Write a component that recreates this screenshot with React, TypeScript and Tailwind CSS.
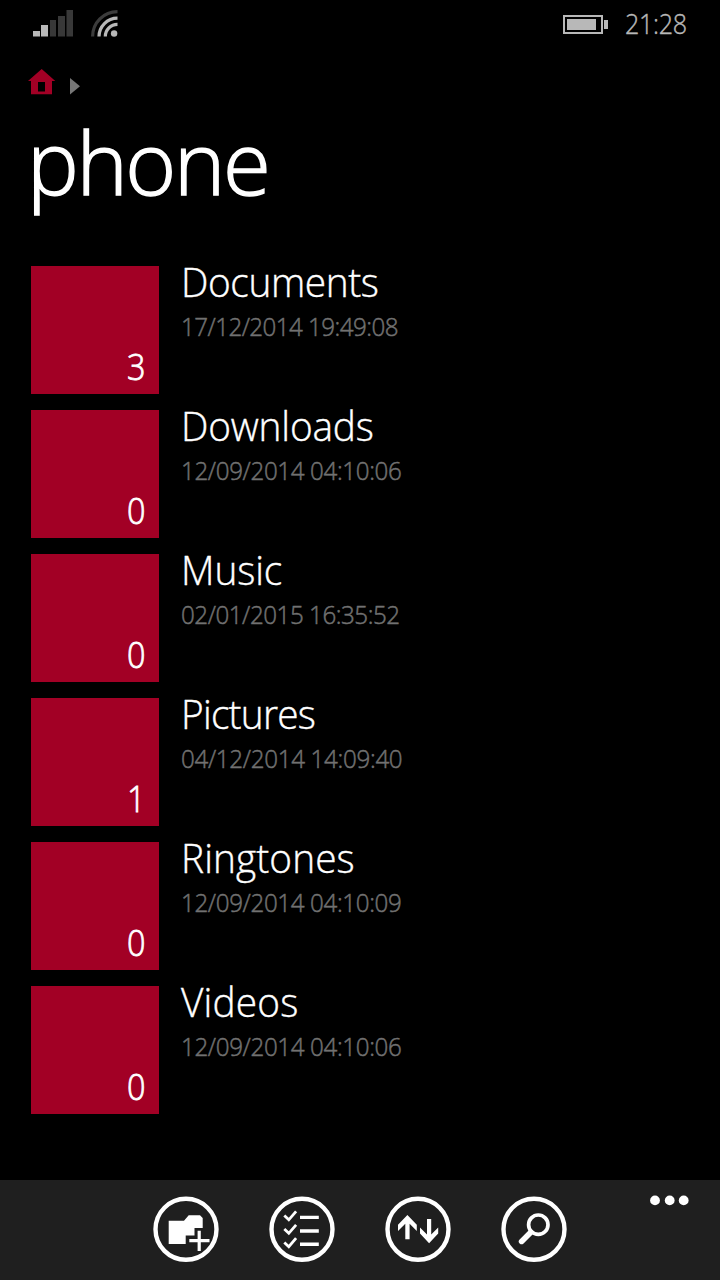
import type { ReactNode } from "react";

interface Folder {
  name: string;
  date: string;
  count: number;
  nameSpacing: string;
  dateSpacing: string;
}

const folders: Folder[] = [
  { name: "Documents", date: "17/12/2014 19:49:08", count: 3, nameSpacing: "tracking-[-0.4px]", dateSpacing: "tracking-[-0.6px]" },
  { name: "Downloads", date: "12/09/2014 04:10:06", count: 0, nameSpacing: "tracking-[-0.2px]", dateSpacing: "tracking-[-0.4px]" },
  { name: "Music", date: "02/01/2015 16:35:52", count: 0, nameSpacing: "tracking-[-0.1px]", dateSpacing: "tracking-[-0.5px]" },
  { name: "Pictures", date: "04/12/2014 14:09:40", count: 1, nameSpacing: "tracking-[-0.8px]", dateSpacing: "tracking-[-0.35px]" },
  { name: "Ringtones", date: "12/09/2014 04:10:09", count: 0, nameSpacing: "tracking-[0.1px]", dateSpacing: "tracking-[-0.4px]" },
  { name: "Videos", date: "12/09/2014 04:10:06", count: 0, nameSpacing: "tracking-[0.2px]", dateSpacing: "tracking-[-0.4px]" },
];

const StatusBar = () => (
  <header className="flex h-12 items-start px-[33px]">
    <svg width="41" height="28" viewBox="0 0 41 28" className="mt-[9px]">
      <path d="M0 22h7v5.600H0zM8 16h7v11.600H8z" fill="#b8b8b8" />
      <path d="M17 11h6v16.600h-6zM25 7h7v20.600h-7zM33.500 1H40v26.600h-6.500z" fill="#383838" />
    </svg>
    <svg width="27" height="28" viewBox="0 0 27 28" className="ml-[17px] mt-[9px]" fill="none" strokeWidth="3.2">
      <path d="M1.600 27.600A24.900 24.900 0 0 1 26.500 2.700" stroke="#3c3c3c" />
      <path d="M8 27.600A18.500 18.500 0 0 1 26.500 9.100" stroke="#b8b8b8" />
      <path d="M14.300 27.600A12.200 12.200 0 0 1 26.500 15.400" stroke="#b8b8b8" />
      <circle cx="23.100" cy="24.500" r="3.200" fill="#b8b8b8" />
    </svg>
    <div className="ml-auto flex items-start">
      <svg width="46" height="20" viewBox="0 0 46 20" className="mr-[16px] mt-[15px]">
        <rect x="1" y="1" width="38" height="17" fill="none" stroke="#b8b8b8" strokeWidth="2" />
        <path d="M4 4h29v11H4zM41 5h4v9h-4z" fill="#b8b8b8" />
      </svg>
      <span className="w-[62px] origin-left scale-x-93 whitespace-nowrap text-[27px] leading-12 tracking-[-0.3px] text-[#b8b8b8] [-webkit-text-stroke:0.4px]">
        21:28
      </span>
    </div>
  </header>
);

const Breadcrumb = () => (
  <nav className="flex h-[50px] items-start pl-7 pt-5">
    <svg width="28" height="28" viewBox="0 0 28 28">
      <path d="M13.700 1 27.300 13H24v13.300H3V13H0zM10 14v9.500h7V14z" fill="#a20025" fillRule="evenodd" />
    </svg>
    <svg width="11" height="18" viewBox="0 0 11 18" className="ml-[14px] mt-[9px]">
      <path d="M0 1 10 9.200 0 17.500z" fill="#777" />
    </svg>
  </nav>
);

const FolderRow = ({ folder }: { folder: Folder }) => (
  <li className="flex h-32">
    <div className="flex w-32 items-end justify-end bg-[#a20025] pr-[13px]">
      <span className="origin-right scale-x-90 text-[36px] leading-[55px] [-webkit-text-stroke:0.8px]">{folder.count}</span>
    </div>
    <div className="ml-[22px] flex flex-col items-start whitespace-nowrap">
      <span className={`origin-left scale-x-97 text-[40px] leading-[32px] [-webkit-text-stroke:0.4px] ${folder.nameSpacing}`}>
        {folder.name}
      </span>
      <span
        className={`mt-[10px] origin-left scale-x-93 text-[26px] leading-[36px] text-[#717171] [-webkit-text-stroke:0.5px] ${folder.dateSpacing}`}
      >
        {folder.date}
      </span>
    </div>
  </li>
);

const AppBarButton = ({ label, children }: { label: string; children: ReactNode }) => (
  <button type="button" aria-label={label} className="h-[66px] w-[66px] text-white">
    <svg width="66" height="66" viewBox="0 0 66 66" fill="none" stroke="currentColor">
      <circle cx="33" cy="33.300" r="30.500" strokeWidth="4.400" />
      {children}
    </svg>
  </button>
);

const AppBar = () => (
  <footer className="relative flex h-[100px] justify-center gap-[50px] bg-[#1f1f1f] pt-4">
    <AppBarButton label="new folder">
      <path
        d="M15.700 24.700H31l4.700-5.400H47l2.700 2.700v10h-8.200v7.500h-8.800V48h-17z"
        fill="currentColor"
        stroke="none"
      />
      <path d="M46.200 34.700V55M36.300 44.700h20.200" strokeWidth="3.200" />
    </AppBarButton>
    <AppBarButton label="select">
      <path d="M15.300 19.500l4.500 4.300 7.300-8.500M15.300 33l4.500 4.300 7.300-8.500M15.300 46.400l4.500 4.300 7.300-8.500" strokeWidth="2.800" />
      <path d="M31 21.400h18.800M31 35h18.800M31 48.300h18.800" strokeWidth="3.400" />
    </AppBarButton>
    <AppBarButton label="sort">
      <path
        d="M13 28.700 22.400 19l9.400 9.700V35l-7.200-7.300v15.600h-4.300V27.700L13 35zM35 31.500l7 7V23h4.200v15.500l7-7v6L44.100 47.300 35 37.500z"
        fill="currentColor"
        stroke="none"
      />
    </AppBarButton>
    <AppBarButton label="search">
      <circle cx="37.300" cy="28.700" r="9.700" strokeWidth="3.700" />
      <path d="M29.800 36.200 20.600 45.400" strokeWidth="5.600" strokeLinecap="round" />
    </AppBarButton>
    <button type="button" aria-label="more" className="absolute right-[31px] top-[15px]">
      <svg width="40" height="11" viewBox="0 0 40 11" fill="#fff">
        <circle cx="6" cy="5.400" r="4.900" />
        <circle cx="20.700" cy="5.400" r="4.900" />
        <circle cx="34.700" cy="5.400" r="4.900" />
      </svg>
    </button>
  </footer>
);

export default function App() {
  return (
    <div className="flex h-[1280px] w-[720px] flex-col overflow-hidden bg-black font-['Open_Sans',sans-serif] font-light text-white">
      <StatusBar />
      <Breadcrumb />
      <h1 className="h-[168px] pl-[27px] text-[87px] font-light leading-[127px] tracking-[-2.4px] [-webkit-text-stroke:1.4px]">phone</h1>
      <ul className="flex flex-1 flex-col gap-4 pl-[31px]">
        {folders.map((folder) => (
          <FolderRow key={folder.name} folder={folder} />
        ))}
      </ul>
      <AppBar />
    </div>
  );
}
